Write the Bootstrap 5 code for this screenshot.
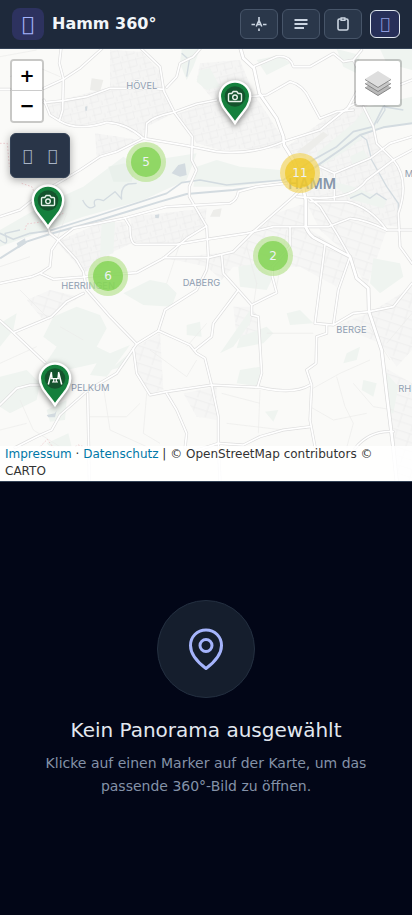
<!DOCTYPE html>
<html lang="de">
<head>
<meta charset="utf-8">
<meta name="viewport" content="width=device-width, initial-scale=1">
<title>Hamm 360°</title>
<link href="https://cdn.jsdelivr.net/npm/bootstrap@5.3.0/dist/css/bootstrap.min.css" rel="stylesheet">
<style>
body{font-family:"DejaVu Sans",sans-serif;background:#020617;color:#e2e8f0}
.topbar{background:#1e293b;border-bottom:1px solid #334155;padding:8px 12px}
.brand-icon{width:32px;height:32px;border-radius:8px;background:#2d325f;color:#a5b4fc;font-size:20px}
.brand-name{font-size:16px;line-height:24px;color:#f1f5f9}
.tool{width:38px;height:30px;border:1px solid #475569;border-radius:6px;background:#2a374a;color:#cbd5e1}
.tool-user{width:30px;height:28px;border:1px solid #e2e8f0;border-radius:6px;background:#272f58;color:#8e9bdc;font-size:16px}
.glyph{font-family:"DejaVu Sans",sans-serif;line-height:1}
.map-pane{flex:1 1 50%;border-bottom:1px solid #334155;background:#fafaf8}
.map-pane .basemap{display:block;position:absolute;inset:0;width:100%;height:100%}
.pane-empty{flex:1 1 50%;padding:0 24px}
.map-left{top:10px;left:10px;gap:10px}
.map-right{top:10px;right:10px}
.frame{border:2px solid rgba(0,0,0,.2);border-radius:4px;background-clip:padding-box;overflow:hidden}
.zoom-btn{width:30px;height:30px;background:#fff;border:0;color:#000;font:bold 18px/28px "DejaVu Sans",sans-serif}
.zoom-btn:first-child{border-bottom:1px solid #ccc}
.mode-box{width:60px;height:45px;background:#293548;border:1px solid #334155;border-radius:6px;box-shadow:0 2px 8px rgba(0,0,0,.35)}
.mode-box button{color:#a9b5c6;font-size:16px;width:25px}
.mode-box button:hover{color:#e2e8f0}
.layers-btn{width:48px;height:48px;background-color:#fff}
.pin{width:44px;height:54px;transform:translate(-50%,-49px);filter:drop-shadow(0 2px 3px rgba(0,0,0,.5))}
.pin svg{display:block}
.cluster{width:40px;height:40px;transform:translate(-50%,-50%);background:rgba(181,226,140,.65)}
.cluster span{width:30px;height:30px;background:rgba(124,209,76,.75);color:#edf2f4;font-size:12px}
.cluster.many{background:rgba(241,211,87,.65)}
.cluster.many span{background:rgba(240,198,32,.7)}
.at-a{left:235px;top:75px}.at-b{left:48px;top:179px}.at-c{left:55px;top:357px}
.at-5{left:146px;top:113px}.at-11{left:300px;top:124px}.at-2{left:273px;top:207px}.at-6{left:108px;top:227px}
.attribution{background:rgba(255,255,255,.85);color:#333;font-size:12px;line-height:17px;padding:0 5px 1px}
.attribution a{color:#0078a8;text-decoration:none}
.disc{width:98px;height:98px;background:#151e2d;border:1px solid #243041;color:#a5b4fc;margin-bottom:20px}
.empty-title{font-size:20px;line-height:24px;margin-bottom:10px;font-weight:400}
.empty-text{font-size:14px;line-height:23px;color:#8492a8;max-width:360px}
</style>
<script src="https://cdn.jsdelivr.net/npm/bootstrap@5.3.0/dist/js/bootstrap.bundle.min.js"></script>
</head>
<body class="d-flex flex-column vh-100">
<header class="topbar d-flex align-items-center gap-2">
  <span class="brand-icon glyph d-flex align-items-center justify-content-center" aria-hidden="true">&#xf3ee;</span>
  <h1 class="brand-name fw-bold mb-0 me-auto">Hamm 360°</h1>
  <div class="d-flex gap-1">
    <button type="button" class="tool p-0 d-flex align-items-center justify-content-center" aria-label="Standort">
      <svg width="16" height="16" viewBox="0 0 16 16" fill="none" stroke="currentColor" stroke-width="1.600"><path d="M8 1v3M8 12.500v2.500M.5 8.500H4M12 8.500h3.500M5.200 10.500L8 4.500L10.800 10.500M6.500 8.500h3"/></svg>
    </button>
    <button type="button" class="tool p-0 d-flex align-items-center justify-content-center" aria-label="Liste">
      <svg width="16" height="16" viewBox="0 0 16 16" fill="none" stroke="currentColor" stroke-width="2"><path d="M1.500 4h13M1.500 8h13M1.500 12h9.500"/></svg>
    </button>
    <button type="button" class="tool p-0 d-flex align-items-center justify-content-center" aria-label="Zwischenablage">
      <svg width="16" height="16" viewBox="0 0 16 16" fill="none" stroke="currentColor" stroke-width="1.600" stroke-linejoin="round"><path d="M5.500 3H4.500Q3 3 3 4.500v8q0 1.500 1.500 1.500h7q1.500 0 1.500-1.500V4.500Q13 3 11.500 3h-1"/><path d="M6 2h4v2.200H6z"/></svg>
    </button>
  </div>
  <button type="button" class="tool-user glyph p-0 d-flex align-items-center justify-content-center" aria-label="Anmelden">&#xf4e1;</button>
</header>

<main class="flex-grow-1 d-flex flex-column">
<section class="map-pane position-relative overflow-hidden" aria-label="Karte">
  <svg class="basemap" viewBox="0 147 1236 1296" preserveAspectRatio="xMidYMid slice" aria-hidden="true">
    <defs>
      <pattern id="streets" width="46" height="38" patternUnits="userSpaceOnUse" patternTransform="rotate(-14)"><path d="M0 5H46M0 24H30M8 5V38M30 0V24M38 24V38" fill="none" stroke="#ececec" stroke-width="2"/></pattern>
      <pattern id="streets2" width="40" height="50" patternUnits="userSpaceOnUse" patternTransform="rotate(18)"><path d="M0 8H40M12 8V50M0 32H40" fill="none" stroke="#ececec" stroke-width="2"/></pattern>
      <path id="quarters" d="M330 150L425 155L485 220L490 280L520 340L440 380L425 412L330 365L240 385L150 345L145 310L330 262ZM285 400L420 420L330 460L290 470ZM600 190L720 180L760 280L800 340L845 410L840 445L660 450L590 430L525 345L640 300L590 240ZM860 440L1000 340L1100 310L1130 430L1210 530L1195 680L1110 670L1040 610L930 600L905 530ZM170 725L300 670L375 665L395 730L330 760L325 800L250 815ZM390 650L620 625L615 675L530 735L400 725Z"/>
      <path id="quarters2" d="M500 775L700 755L830 640L915 610L918 680L1050 770L1010 860L900 800L700 800L665 840L620 800ZM920 610L1040 605L1160 690L1100 860L1050 770L960 690ZM400 1045L480 1000L490 1170L450 1180L410 1120ZM1107 940L1236 860V1050L1190 1100L1140 1030L1010 975ZM1150 1100L1236 1150V1443H1190L1170 1280ZM150 870L240 890L130 960L80 900ZM700 920L750 920L775 950L775 1010L710 1010ZM550 1180L650 1160L650 1260L590 1250Z"/>
      <g id="main-roads">
        <path d="M722 147L730 175L762 205L778 280L830 355L850 410L852 435L880 480L905 540L917 600V680Q925 700 940 712L1050 770L1070 835L1105 865L1107 935L1145 1050L1160 1180L1180 1345L1190 1443"/>
      </g>
      <g id="roads">
        <path d="M183 147L178 190L190 235L188 330L178 362"/>
        <path d="M305 147L240 205L190 238L132 265M0 268H30M132 308L190 302L260 290L330 265H460L490 268"/>
        <path d="M425 147L480 200L492 275L525 340L577 410L575 480L590 510L568 560V590L620 680L625 770L620 810L590 870L495 930L475 992L410 1032"/>
        <path d="M132 300L150 345L178 362Q230 395 320 367Q380 370 430 415L560 437L650 455Q760 465 850 425L960 390L1050 318L1110 290L1236 240"/>
        <path d="M430 415L350 455L300 470L240 510L130 575L60 630L0 650M437 415L440 370Q460 350 520 337L590 312L650 300"/>
        <path d="M500 262L530 230L540 190L580 170L600 147"/>
        <path d="M752 290L800 285L870 245Q910 255 930 300L960 355L1010 335L1060 330"/>
        <path d="M760 200L830 170Q870 165 880 200H930L1000 160L1030 185L1060 180L1085 150M1060 180L1090 240L1040 330"/>
        <path d="M145 685L150 700L175 720L230 780L250 815L260 870L330 950L410 1032L350 1120L265 1170L180 1245L155 1290L110 1310L45 1343"/>
        <path d="M0 850L95 830L120 820L150 800L155 750L175 720L220 685L370 655L500 620L690 610Q712 600 715 575L770 560L860 550"/>
        <path d="M375 655L390 680Q390 735 410 733H530L620 718L740 700L820 680H985L1050 655Q1100 660 1160 690H1236"/>
        <path d="M250 830L410 818L490 775L560 715L620 678M490 773H625L700 755L760 695L880 590L910 560M120 820L160 838L260 830"/>
        <path d="M0 962L40 998L135 1088M40 998L155 950L200 905L250 880"/>
        <path d="M475 992L570 1035L590 1060L615 1075L635 1155L655 1250V1330L660 1443"/>
        <path d="M400 1045L410 1120L450 1185L500 1175L635 1155L780 1162Q880 1185 930 1155M500 1180L530 1230L560 1300L555 1345"/>
        <path d="M585 1050L635 1010L640 970L715 870L755 915L805 890L830 878L817 830V800L870 740V680M755 915V945L775 950L785 1120L773 1160M665 765L670 820L715 870"/>
        <path d="M975 735L945 970L1000 975L1060 940L1107 935L1180 920L1236 850M1050 770L1015 870L1000 975M980 975V1000L950 1010L948 1090L920 1110L935 1155L930 1260L945 1340"/>
        <path d="M930 1280L850 1290L780 1310L730 1335L655 1330L560 1360M1180 1295Q1110 1290 1065 1345M263 1180L268 1443M0 1215L50 1165L90 1155H130"/>
        <path d="M960 500L1003 520L1110 475L1170 430L1236 410M1003 520V600M890 590Q1050 610 1100 540L1180 480L1236 450M1090 320L1120 380L1130 430L1180 480Q1230 540 1195 640L1200 740L1236 790"/>
        <path d="M930 605H1040Q1110 620 1160 690M930 595L960 620L1010 700L1050 770"/>
      </g>
    </defs>
    <rect width="1236" height="1443" fill="#fafaf8"/>
    <use href="#quarters" fill="#f5f5f4"/><use href="#quarters" fill="url(#streets)"/>
    <use href="#quarters2" fill="#f6f6f5"/><use href="#quarters2" fill="url(#streets2)"/>
    <g fill="#ededea"><path d="M275 235L310 240L300 275L270 270ZM640 630L665 625L660 650L630 650ZM890 455L970 395L985 405L910 470Z"/></g>
    <g fill="#eff4f0">
      <path d="M545 147H600L580 200L560 240L540 190ZM600 210L630 205L660 260L620 270L590 245ZM770 180L840 165L870 190L800 225ZM1010 147L1080 165L1070 220L1030 200ZM1140 147H1236V210L1160 190Z"/>
      <path d="M140 610L250 560L370 470L400 490L590 460L560 540L430 600L250 650L0 740V690ZM590 500L650 480L720 500L840 510V540L700 560L580 560Z"/>
      <path d="M950 460L1060 370L1100 320L1236 290V370L1120 390L1040 450L960 500ZM980 540L1060 560L1160 600L1150 625L1060 600Z"/>
      <path d="M305 670L345 665L340 760L300 770ZM370 880L450 840L500 850L530 880L515 920L430 915ZM160 950L230 920L300 945L320 985L290 1040L330 1060L390 1035L320 1130L270 1125L290 1090L200 1110L130 1100L170 1040L130 1010ZM0 1130L80 1110L120 1150L110 1200L30 1240L0 1220Z"/>
      <path d="M715 800L770 790L820 830L800 870L720 860ZM1120 775L1200 790L1210 830L1140 880L1110 850ZM560 975L600 965L605 1010L560 1005ZM660 1060L750 930L750 970L700 1040ZM720 1010L800 980L820 1000L790 1030L710 1045ZM860 940L900 930L940 970L870 975ZM1040 1060L1080 1040L1070 1080L1030 1090ZM720 1110L780 1100L780 1160L710 1150ZM0 970L50 940L40 990L0 1040ZM330 1110L410 1040L370 1100Z"/>
      <path d="M140 1230L200 1200L195 1260L150 1265ZM140 1330L205 1300L215 1340H150ZM795 1235L835 1230L820 1265ZM1160 1120L1195 1160L1180 1240H1165ZM1090 1140L1130 1150L1120 1190L1085 1170ZM1050 470L1090 450L1110 480L1060 500Z"/>
    </g>
    <path d="M325 500L375 490L405 510L395 545L340 545Z" fill="#e9f0eb"/>
    <g fill="none" stroke="#ebebea" stroke-width="2">
      <path d="M0 170L110 150M30 230L110 200L180 230M0 800L90 770M60 870L150 960M200 640L170 720M550 700L500 850M770 850L760 920M860 690L830 860M0 1090L110 1040M60 1200L100 1290L180 1340M310 1160L330 1290L440 1340M440 1180L430 1300L480 1330M665 1180L780 1210M780 1170L775 1300M800 1000L940 1000M930 1170L1020 1120L1110 1080M1010 1130L1035 1220L1060 1270L1040 1343M1107 980L1170 1080M1060 1150L1120 1220L1180 1230M590 1080L560 1130L450 1050M680 1270L850 1290M1236 940L1160 1030M740 740L770 850M180 980L250 1020M560 1040L620 970M270 1250H380L420 1210M930 1220L1000 1260L1100 1240M0 1290L80 1270"/>
    </g>
    <g fill="none" stroke="#d3dbe0" stroke-linejoin="round">
      <path d="M0 775L80 725L150 702L300 660L480 605L560 582L700 570L850 550L940 505L1020 450L1080 405L1150 382L1236 370" stroke-width="6"/>
      <path d="M0 700L40 718L90 700L150 692L300 645L500 580L545 548L600 540L680 555L850 540L930 485L1010 440L1060 395L1120 380L1150 320L1210 330" stroke-width="5"/>
      <path d="M248 600Q265 635 285 618Q275 590 310 602L345 575L365 597Q360 560 385 552L410 550M545 160L568 180L560 230M1080 405L1100 420L1115 480L1160 560L1195 610V640M1050 595L1085 580L1110 595L1130 580L1160 600M1130 370L1155 330L1150 290L1185 270M0 720Q30 745 15 700L60 690" stroke-width="4"/>
    </g>
    <g fill="#d3dbe0"><path d="M535 495L555 490L560 525L540 530L515 520ZM50 730L75 715L78 730L55 745ZM465 645L478 643L476 655L466 654ZM255 320L262 318L261 332L256 332ZM140 1245L165 1240L170 1230L165 1252L145 1252Z"/></g>
    <g fill="none" stroke="#efcfd2" stroke-width="3" stroke-dasharray="5 5"><path d="M0 430L22 430L28 500M65 550L95 560L110 590M75 690L80 672L130 665L190 640M120 1340L142 1318L160 1343M225 1340L235 1335L262 1343"/></g>
    <g fill="none" stroke-linejoin="round" stroke-linecap="round">
      <use href="#roads" stroke="#dedede" stroke-width="9"/><use href="#main-roads" stroke="#dadada" stroke-width="12"/>
      <use href="#roads" stroke="#fff" stroke-width="5"/><use href="#main-roads" stroke="#fff" stroke-width="8"/>
    </g>
    <g font-family="Inter, sans-serif" font-size="28" fill="#8f9db1" stroke="#fafaf8" stroke-width="3" paint-order="stroke">
      <text x="379" y="266">HÖVEL</text><text x="184" y="866">HERRINGEN</text><text x="548" y="857">DABERG</text><text x="1009" y="998">BERGE</text><text x="213" y="1174">PELKUM</text><text x="1195" y="1176">RH</text><text x="1214" y="530">M</text>
      <text x="865" y="566" font-size="43" font-weight="600" fill="#8797aa">HAMM</text>
    </g>
  </svg>

  <svg class="d-none">
    <symbol id="pin-shape" viewBox="0 0 44 54"><path d="M22 6.500C13.700 6.500 6.800 13.200 6.800 21.300C6.800 31.500 16 38.500 22 48C28 38.500 37.200 31.500 37.200 21.300C37.200 13.200 30.300 6.500 22 6.500Z" fill="#15803d" stroke="#fff" stroke-width="2.400"/><circle cx="22" cy="21.500" r="10.300" fill="#14532d"/></symbol>
  </svg>
  <button type="button" class="pin btn p-0 border-0 position-absolute at-a" aria-label="Panorama"><svg width="44" height="54" viewBox="0 0 44 54"><use href="#pin-shape"/><g fill="none" stroke="#e7f3eb" stroke-width="1.400" stroke-linejoin="round"><path d="M16.500 18.500h2.300l1.400-2h3.600l1.400 2h2.300q1 0 1 1v6q0 1-1 1h-11q-1 0-1-1v-6q0-1 1-1z"/><circle cx="22" cy="22.300" r="2.300"/></g></svg></button>
  <button type="button" class="pin btn p-0 border-0 position-absolute at-b" aria-label="Panorama"><svg width="44" height="54" viewBox="0 0 44 54"><use href="#pin-shape"/><g fill="none" stroke="#e7f3eb" stroke-width="1.400" stroke-linejoin="round"><path d="M16.500 18.500h2.300l1.400-2h3.600l1.400 2h2.300q1 0 1 1v6q0 1-1 1h-11q-1 0-1-1v-6q0-1 1-1z"/><circle cx="22" cy="22.300" r="2.300"/></g></svg></button>
  <button type="button" class="pin btn p-0 border-0 position-absolute at-c" aria-label="Panorama"><svg width="44" height="54" viewBox="0 0 44 54"><use href="#pin-shape"/><g fill="none" stroke="#fff" stroke-width="1.500"><path d="M18.500 15L15.300 27.500M25.500 15L28.700 27.500M18.300 15.500l.7 6M25.700 15.500l-.7 6"/><path d="M17.500 21.700h9M19 25h6M20.700 22v3M23.300 22v3" stroke-width="1.200"/></g></svg></button>

  <button type="button" class="cluster at-5 border-0 p-0 rounded-circle position-absolute d-flex align-items-center justify-content-center"><span class="rounded-circle d-flex align-items-center justify-content-center">5</span></button>
  <button type="button" class="cluster many at-11 border-0 p-0 rounded-circle position-absolute d-flex align-items-center justify-content-center"><span class="rounded-circle d-flex align-items-center justify-content-center">11</span></button>
  <button type="button" class="cluster at-2 border-0 p-0 rounded-circle position-absolute d-flex align-items-center justify-content-center"><span class="rounded-circle d-flex align-items-center justify-content-center">2</span></button>
  <button type="button" class="cluster at-6 border-0 p-0 rounded-circle position-absolute d-flex align-items-center justify-content-center"><span class="rounded-circle d-flex align-items-center justify-content-center">6</span></button>

  <div class="map-left position-absolute d-flex flex-column align-items-start">
    <div class="frame d-flex flex-column">
      <button type="button" class="zoom-btn p-0" aria-label="Vergrößern">+</button>
      <button type="button" class="zoom-btn p-0" aria-label="Verkleinern">−</button>
    </div>
    <div class="mode-box d-flex align-items-center justify-content-center">
      <button type="button" class="glyph btn p-0 border-0" aria-label="Ansicht teilen">&#xf3ee;</button>
      <button type="button" class="glyph btn p-0 border-0" aria-label="Vollbild">&#xf3ef;</button>
    </div>
  </div>
  <button type="button" class="layers-btn frame map-right p-0 position-absolute d-flex align-items-center justify-content-center" aria-label="Ebenen">
    <svg width="28" height="28" viewBox="0 0 28 28"><path d="M1 18.500L14 26.500L27 18.500L22 15.500H6Z" fill="#b9b9b9"/><path d="M1 18.500L14 26.500L27 18.500" fill="none" stroke="#858585"/><path d="M1 14.500L14 22.500L27 14.500L22 11.500H6Z" fill="#c8c8c8"/><path d="M1 14.500L14 22.500L27 14.500" fill="none" stroke="#858585"/><path d="M1 10L14 18.500L27 10L14 2Z" fill="#dedede"/><path d="M1 10.500L14 18.500L27 10.500" fill="none" stroke="#8b8b8b"/></svg>
  </button>
  <div class="attribution position-absolute bottom-0 start-0 end-0"><a href="#impressum">Impressum</a> · <a href="#datenschutz">Datenschutz</a> | © OpenStreetMap contributors © CARTO</div>
</section>

<section class="pane-empty d-flex flex-column align-items-center justify-content-center text-center">
  <div class="disc rounded-circle d-flex align-items-center justify-content-center">
    <svg width="48" height="48" viewBox="0 0 48 48" fill="none" stroke="currentColor" stroke-width="3" stroke-linejoin="round"><path d="M24 5C15 5 8.500 12 8.500 20.500C8.500 30 16 37.500 24 43.500C32 37.500 39.500 30 39.500 20.500C39.500 12 33 5 24 5Z"/><circle cx="24" cy="20.500" r="6"/></svg>
  </div>
  <h2 class="empty-title">Kein Panorama ausgewählt</h2>
  <p class="empty-text mb-0">Klicke auf einen Marker auf der Karte, um das passende 360°-Bild zu öffnen.</p>
</section>
</main>
</body>
</html>
